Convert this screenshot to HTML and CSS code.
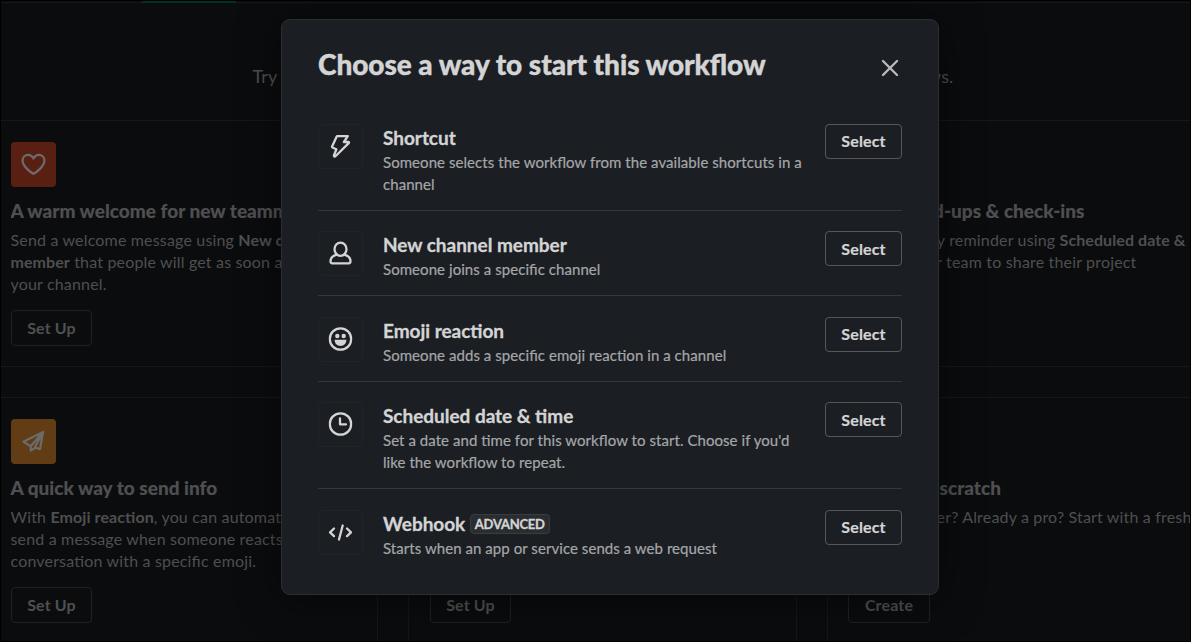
FILE: index.html
```html
<!DOCTYPE html>
<html lang="en">
<head>
<meta charset="utf-8">
<title>Workflow Builder</title>
<link rel="stylesheet" href="styles.css">
</head>
<body>
<div class="page">
  <nav class="tabs"><span class="tab-active"></span></nav>
  <p class="intro">Try one of our templates, or build your own from scratch to create workflows.</p>
  <main class="cards">
    <article class="card">
      <div class="card-icon red"><svg viewBox="0 0 24 24" width="27" height="27"><path d="M12 20.3C9 18.6 2.3 13.5 2.3 8.500C2.300 5.500 4.500 3.400 7.100 3.400C9.500 3.400 11.200 4.900 12 6.800C12.800 4.900 14.500 3.400 16.900 3.400C19.500 3.400 21.700 5.500 21.700 8.500C21.700 13.500 15 18.600 12 20.300Z"/></svg></div>
      <h3 class="cut">A warm welcome for new teammates</h3>
      <p class="cut">Send a welcome message using <b>New channel</b><br><b>member</b> that people will get as soon as they join<br>your channel.</p>
      <button>Set Up</button>
    </article>
    <article class="card"></article>
    <article class="card">
      <div class="card-icon"></div>
      <h3 class="standups">Daily stand-ups &amp; check-ins</h3>
      <p class="daily">Send a daily reminder using <b>Scheduled date &amp;</b></p>
      <p class="team">time for your team to share their project</p>
    </article>
    <article class="card">
      <div class="card-icon orange"><svg viewBox="0 0 24 24" width="27" height="27"><path d="M3 12.200L20.500 3.500L17.800 18.800L13.500 17.500L9.500 20V16.200L3 12.200ZM20.500 3.500L9.500 16.200M20.500 3.500L13 17.500"/></svg></div>
      <h3>A quick way to send info</h3>
      <p class="cut">With <b>Emoji reaction</b>, you can automatically<br>send a message when someone reacts to a<br>conversation with a specific emoji.</p>
      <button>Set Up</button>
    </article>
    <article class="card"><button>Set Up</button></article>
    <article class="card">
      <div class="card-icon"></div>
      <h3>Start from scratch</h3>
      <p class="builder">New builder? Already a pro? Start with a fresh</p>
      <button class="create">Create</button>
    </article>
  </main>
</div>
<section class="modal" role="dialog">
  <header class="modal-head">
    <h1>Choose a way to start this workflow</h1>
    <svg class="close" viewBox="0 0 20 20" width="20" height="20"><path d="M3 3L17 17M17 3L3 17"/></svg>
  </header>
  <div class="row high">
    <div class="tile"><svg viewBox="0 0 24 24"><path d="M8.600 2.200H19.300L15.400 8H19.800C20.500 8 20.700 8.600 20.200 9.100L7.200 22C6.200 23 5.100 22.400 5.500 21.200L7.900 15.200L4.400 13.800C3.700 13.500 3.400 13 3.700 12.300L8.200 2.600"/></svg></div>
    <div class="text"><h2>Shortcut</h2><p>Someone selects the workflow from the available shortcuts in a channel</p></div>
    <button class="select">Select</button>
  </div>
  <div class="row">
    <div class="tile"><svg viewBox="0 0 24 24"><ellipse cx="12" cy="8.200" rx="6" ry="6.600"/><path d="M8.200 13.700C4.200 14.800 2 17.300 2 20.300C2 21.700 2.700 22.300 3.800 22.300H20.200C21.300 22.300 22 21.700 22 20.300C22 17.300 19.800 14.800 15.800 13.700"/></svg></div>
    <div class="text"><h2>New channel member</h2><p>Someone joins a specific channel</p></div>
    <button class="select">Select</button>
  </div>
  <div class="row low high">
    <div class="tile"><svg viewBox="0 0 24 24"><circle cx="12" cy="12" r="10.700"/><g class="solid"><circle cx="8.800" cy="9" r="2.200"/><circle cx="15.200" cy="9" r="2.200"/><path d="M6.100 12.700H17.900C17.900 16.500 15.300 18.900 12 18.900S6.100 16.500 6.100 12.700Z"/></g></svg></div>
    <div class="text"><h2>Emoji reaction</h2><p>Someone adds a specific emoji reaction in a channel</p></div>
    <button class="select">Select</button>
  </div>
  <div class="row">
    <div class="tile"><svg viewBox="0 0 24 24"><circle cx="12" cy="12" r="10.700"/><path d="M11.500 6.500V12.300H17.500"/></svg></div>
    <div class="text"><h2>Scheduled date &amp; time</h2><p>Set a date and time for this workflow to start. Choose if you'd like the workflow to repeat.</p></div>
    <button class="select">Select</button>
  </div>
  <div class="row low high">
    <div class="tile"><svg viewBox="0 0 24 24"><path d="M5.500 8.500L1.500 12.300L5.500 16.100M18.500 8.500L22.500 12.300L18.500 16.100M14.200 5.500L10.500 19.500"/></svg></div>
    <div class="text"><h2>Webhook <span class="badge">ADVANCED</span></h2><p>Starts when an app or service sends a web request</p></div>
    <button class="select">Select</button>
  </div>
</section>
</body>
</html>
```
FILE: styles.css
```css
* { box-sizing: border-box; margin: 0; padding: 0; }
body { width: 1191px; height: 642px; overflow: hidden; position: relative; background: #000; font-family: Lato, sans-serif; font-size: 15px; line-height: 22px; font-feature-settings: "liga" 1; }
.page { width: 1191px; height: 642px; border: 1px solid #000; background: #0b0c0e; overflow: hidden; color: #4f4f51; }
.tabs { height: 2px; border-bottom: 1px solid #151719; padding-left: 141px; }
.tab-active { display: block; width: 94px; height: 2px; background: #003125; }
.intro { margin: 62px 0 0 251.5px; width: 701px; height: 22px; font-size: 18px; letter-spacing: .15px; text-align-last: justify; white-space: nowrap; }
.cards { display: grid; grid-template-columns: repeat(3, 389px); grid-auto-rows: 247px; gap: 30px; margin: 33px 0 0 -12px; }
.card { border: 1px solid #151718; border-radius: 6px; padding: 21px 0 0 21px; display: flex; flex-direction: column; align-items: flex-start; white-space: nowrap; }
.card-icon { width: 45px; height: 45px; border-radius: 4px; display: grid; place-items: center; flex: none; }
.card-icon svg { fill: none; stroke: #6b6b6b; stroke-width: 2; stroke-linejoin: round; }
.red { background: #5a1f13; }
.orange { background: #613c14; }
.card h3 { font-size: 19px; font-weight: 900; line-height: 24px; margin: 12px 0 0 -.5px; height: 30px; -webkit-text-stroke: .15px #4f4f51; }
.card p { font-size: 16px; letter-spacing: .17px; margin-left: -.5px; }
.card b { letter-spacing: .08px; }
.card .cut { width: 271.5px; overflow: hidden; }
.card button { margin-top: auto; margin-bottom: 20px; height: 36px; width: 81px; padding-bottom: 1px; border: 1px solid #1f2123; border-radius: 4px; background: none; color: #505052; font: 700 16px Lato, sans-serif; letter-spacing: .15px; }
.card .create { width: 82px; margin-left: -1px; }
.standups, .daily, .team, .builder { text-align: right; }
.standups { width: 236px; }
.daily { width: 337px; }
.team { width: 288px; }
.builder { width: 343px; }
.modal { position: absolute; left: 281px; top: 19px; width: 658px; height: 576px; padding: 0 36px; border: 1px solid #2c2d2f; border-radius: 9px; background: #1b1e23; box-shadow: 0 4px 40px rgba(0,0,0,.5); color: #d4d4d5; }
.modal-head { height: 84px; padding-top: 25px; display: flex; justify-content: space-between; }
.modal-head h1 { font-size: 28px; line-height: 38px; font-weight: 900; letter-spacing: -.05px; white-space: nowrap; -webkit-text-stroke: .4px #d4d4d5; }
.close { margin: 13px 2px 0 0; fill: none; stroke: #b8b9ba; stroke-width: 2.4; stroke-linecap: round; }
.row { display: flex; align-items: flex-start; width: 584px; height: 107px; padding-top: 20px; border-bottom: 1px solid #34373b; }
.row:nth-child(3) { height: 85px; }
.row:nth-child(4) { height: 86px; }
.row.low { padding-top: 21px; }
.row:last-child { border: 0; }
.tile { width: 45px; height: 45px; border: 1px solid #202327; border-radius: 4px; display: grid; place-items: center; flex: none; }
.tile svg { width: 24px; height: 24px; margin: -1px 0 0 -1px; transform: translateX(.5px); fill: none; stroke: #d4d4d5; stroke-width: 2.3; stroke-linecap: round; stroke-linejoin: round; }
.tile .solid { fill: #d4d4d5; stroke: none; }
.text { margin-left: 20px; width: 442px; padding-right: 15px; }
.text h2 { font-size: 19px; font-weight: 700; letter-spacing: -.03px; line-height: 28px; height: 27px; white-space: nowrap; -webkit-text-stroke: .3px #d4d4d5; }
.text p { color: #a5a6a8; letter-spacing: .06px; -webkit-text-stroke: .2px #a5a6a8; }
.badge { display: inline-block; height: 20px; line-height: 18px; padding: 0 4px; border: 1px solid #3a3d40; border-radius: 4px; background: #2a2d30; font-size: 13px; letter-spacing: -.25px; vertical-align: 2px; }
.select { width: 77px; height: 35px; border: 1px solid #55585b; border-radius: 4px; background: none; color: #d4d4d5; font: 700 16px Lato, sans-serif; letter-spacing: .15px; -webkit-text-stroke: .2px #d4d4d5; }
.high .select { padding-bottom: 2px; }
```
